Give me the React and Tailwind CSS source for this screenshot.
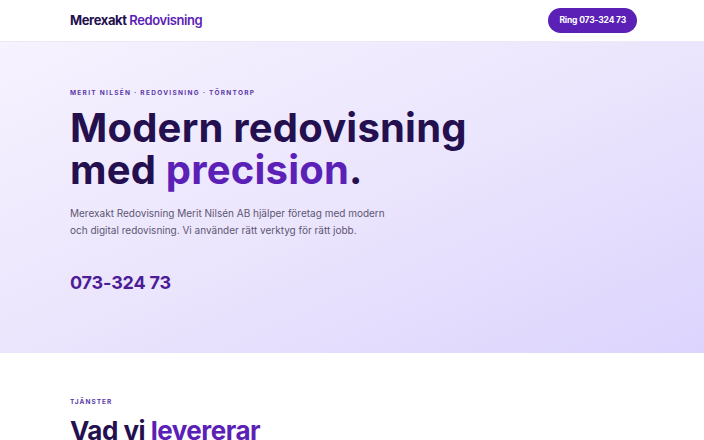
import React from 'react'

const phone = '073-324 73'

function Header() {
  return (
    <header className="bg-white border-b border-[#ece8f7]">
      <div className="px-[70px] pr-[67px] h-[41px] flex items-center justify-between">
        <a href="#" className="text-[13px] font-bold tracking-[-0.03em] text-[#24104f]">
          Merexakt <span className="font-semibold text-[#5b21b6]">Redovisning</span>
        </a>
        <a
          href="#"
          className="h-[25px] px-[11px] rounded-full bg-[#5b21b6] text-white text-[8.5px] font-bold flex items-center tracking-[-0.02em]"
        >
          Ring {phone}
        </a>
      </div>
    </header>
  )
}

function Hero() {
  return (
    <section className="bg-gradient-to-br from-[#f6f2fe] via-[#ebe5fd] to-[#dcd4fd] h-[311px]">
      <div className="px-[70px] pt-[47px]">
        <p className="text-[6.5px] font-bold tracking-[0.2em] text-[#5b3aa8] uppercase">
          Merit Nilsén · Redovisning · Törntorp
        </p>
        <h1 className="mt-[8px] text-[40px] leading-[42px] font-bold tracking-[0.005em] text-[#24104f]">
          Modern redovisning
          <br />
          med <span className="text-[#5b21b6]">precision</span>.
        </h1>
        <p className="mt-[14px] max-w-[330px] text-[10px] leading-[17px] text-[#5d5672]">
          Merexakt Redovisning Merit Nilsén AB hjälper företag med modern och digital redovisning. Vi använder rätt verktyg för rätt jobb.
        </p>
        <a href="#" className="mt-[30px] inline-block text-[18px] font-bold text-[#4c1d95] tracking-[-0.01em]">
          {phone}
        </a>
      </div>
    </section>
  )
}

function Services() {
  return (
    <section className="bg-white">
      <div className="px-[70px] pt-[45px] pb-16">
        <p className="text-[6.5px] font-bold tracking-[0.16em] text-[#5b3aa8] uppercase">Tjänster</p>
        <h2 className="mt-[8px] text-[26px] leading-[30px] font-bold tracking-[-0.02em] text-[#24104f]">
          Vad vi <span className="text-[#5b21b6]">levererar</span>
        </h2>
      </div>
    </section>
  )
}

export default function App() {
  return (
    <div className="min-h-screen bg-white font-['Inter',sans-serif] overflow-hidden">
      <Header />
      <Hero />
      <Services />
    </div>
  )
}
